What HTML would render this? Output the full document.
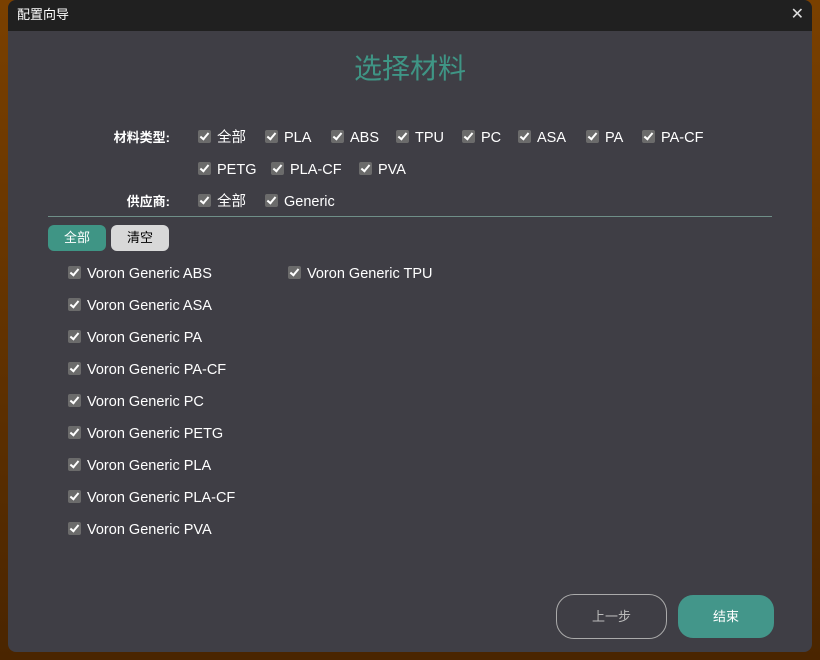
<!DOCTYPE html><html><head><style>
body{margin:0;width:820px;height:660px;overflow:hidden;background:linear-gradient(180deg,#7a4000,#4a2500);font-family:"Liberation Sans","Noto Sans CJK SC",sans-serif;position:relative}
.win{position:absolute;left:8px;top:0;width:804px;height:652px;background:#3f3e45;border-radius:8px;overflow:hidden}
.tb{height:31px;background:#202020;color:#fff;font-size:13px;line-height:30px;padding-left:9px;position:relative}
.x{position:absolute;right:8px;top:0;font-size:16px;color:#ddd}
.t{position:absolute;left:0;right:0;top:47px;text-align:center;color:#3f9585;font-size:28px}
.a{position:absolute;color:#fff;font-size:14.5px;white-space:nowrap;line-height:18px}
.c{position:absolute;width:13px;height:13px;background:#6b6b6b;border-radius:2px}
.c:after{content:"";position:absolute;left:4px;top:1px;width:3px;height:7px;border:solid #fff;border-width:0 2px 2px 0;transform:rotate(40deg)}
.l{position:absolute;color:#fff;font-size:13px;font-weight:bold;text-align:right;width:80px}
.btn{position:absolute;border-radius:6px;font-size:13px;text-align:center;line-height:26px;height:26px;width:58px}
</style></head><body><div class="win">
<div class="tb">配置向导<span class="x">✕</span></div>
<div class="t">选择材料</div>
<div class="l" style="left:82px;top:127px">材料类型:</div>
<div class="l" style="left:82px;top:191px">供应商:</div>
<div style="position:absolute;left:40px;top:216px;width:724px;height:1px;background:#6f8f88"></div>
<div class="btn" style="left:40px;top:225px;background:#3f9585;color:#fff">全部</div>
<div class="btn" style="left:103px;top:225px;background:#d8d8d8;color:#000">清空</div>
<div class="btn" style="left:548px;top:594px;width:111px;height:45px;line-height:44px;border:1px solid #aaa;border-radius:18px;color:#bbb;box-sizing:border-box">上一步</div>
<div class="btn" style="left:670px;top:595px;width:96px;height:43px;line-height:43px;background:#43968a;border-radius:15px;color:#fff">结束</div>
</div>
<script>
var w=document.querySelector('.win'),h='';
function cb(x,y,t){h+='<div class="c" style="left:'+(x-8)+'px;top:'+(y-7)+'px"></div><div class="a" style="left:'+(x+11)+'px;top:'+(y-8)+'px">'+t+'</div>';}
[[198,'全部'],[265,'PLA'],[331,'ABS'],[396,'TPU'],[462,'PC'],[518,'ASA'],[586,'PA'],[642,'PA-CF']].forEach(function(a){cb(a[0],137,a[1])});
[[198,'PETG'],[271,'PLA-CF'],[359,'PVA']].forEach(function(a){cb(a[0],169,a[1])});
cb(198,201,'全部');cb(265,201,'Generic');
['ABS','ASA','PA','PA-CF','PC','PETG','PLA','PLA-CF','PVA'].forEach(function(s,i){cb(68,273+32*i,'Voron Generic '+s)});
cb(288,273,'Voron Generic TPU');
w.insertAdjacentHTML('beforeend',h);
</script></body></html>
